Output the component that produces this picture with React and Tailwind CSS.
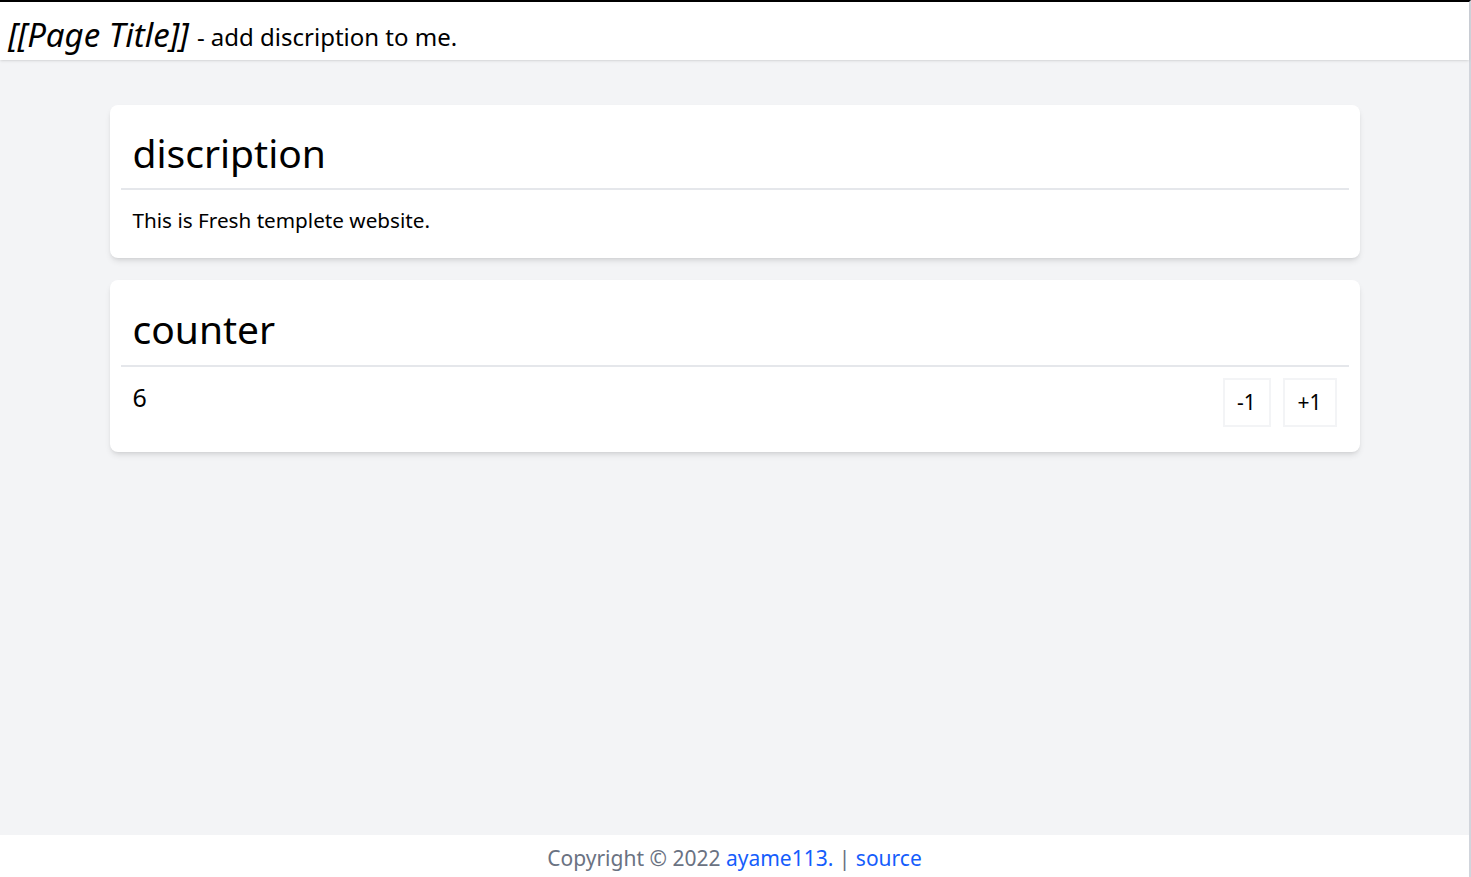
export default function App() {
  return (
    <div className="min-h-[877px] flex flex-col bg-gray-100 border-t-2 border-t-black border-r-2 border-r-gray-300 text-black" style={{ fontFamily: '"Noto Sans", "Open Sans", sans-serif' }}>
      {/* Header */}
      <header className="bg-white h-[58px] px-2 flex items-end pb-[3px] shadow-sm">
        <h1 className="text-[33px] leading-[44px] italic">[[Page Title]]</h1>
        <span className="text-[24px] leading-[40px] ml-2">- add discription to me.</span>
      </header>

      {/* Cards */}
      <main className="flex-1 pt-[45px] flex flex-col items-center gap-[22px]">
        <section className="w-[1250px] bg-white rounded-lg shadow-md p-[11px]">
          <h2 className="text-[39px] leading-[40px] px-3 pt-[17px] pb-[15px] border-b-2 border-gray-200">discription</h2>
          <p className="text-[20.7px] leading-[28px] px-3 pt-[16px] pb-[13px]">This is Fresh templete website.</p>
        </section>

        <section className="w-[1250px] bg-white rounded-lg shadow-md p-[11px]">
          <h2 className="text-[39px] leading-[40px] px-3 pt-[18px] pb-[16px] border-b-2 border-gray-200">counter</h2>
          <div className="flex items-start justify-between px-3 pt-[11px] pb-[14px]">
            <p className="text-[25px] leading-[32px] pt-[3px]">6</p>
            <div className="flex gap-3">
              <button className="h-[49px] w-[48px] border-2 border-gray-100 text-[21px]">-1</button>
              <button className="h-[49px] w-[54px] border-2 border-gray-100 text-[21px]">+1</button>
            </div>
          </div>
        </section>
      </main>

      {/* Footer */}
      <footer className="bg-white h-[42px] flex items-center justify-center text-[21px] text-gray-500 pt-[6px]">
        <span>Copyright © 2022&nbsp;</span>
        <a href="#" className="text-blue-600">ayame113.</a>
        <span>&nbsp;|&nbsp;</span>
        <a href="#" className="text-blue-600">source</a>
      </footer>
    </div>
  );
}
